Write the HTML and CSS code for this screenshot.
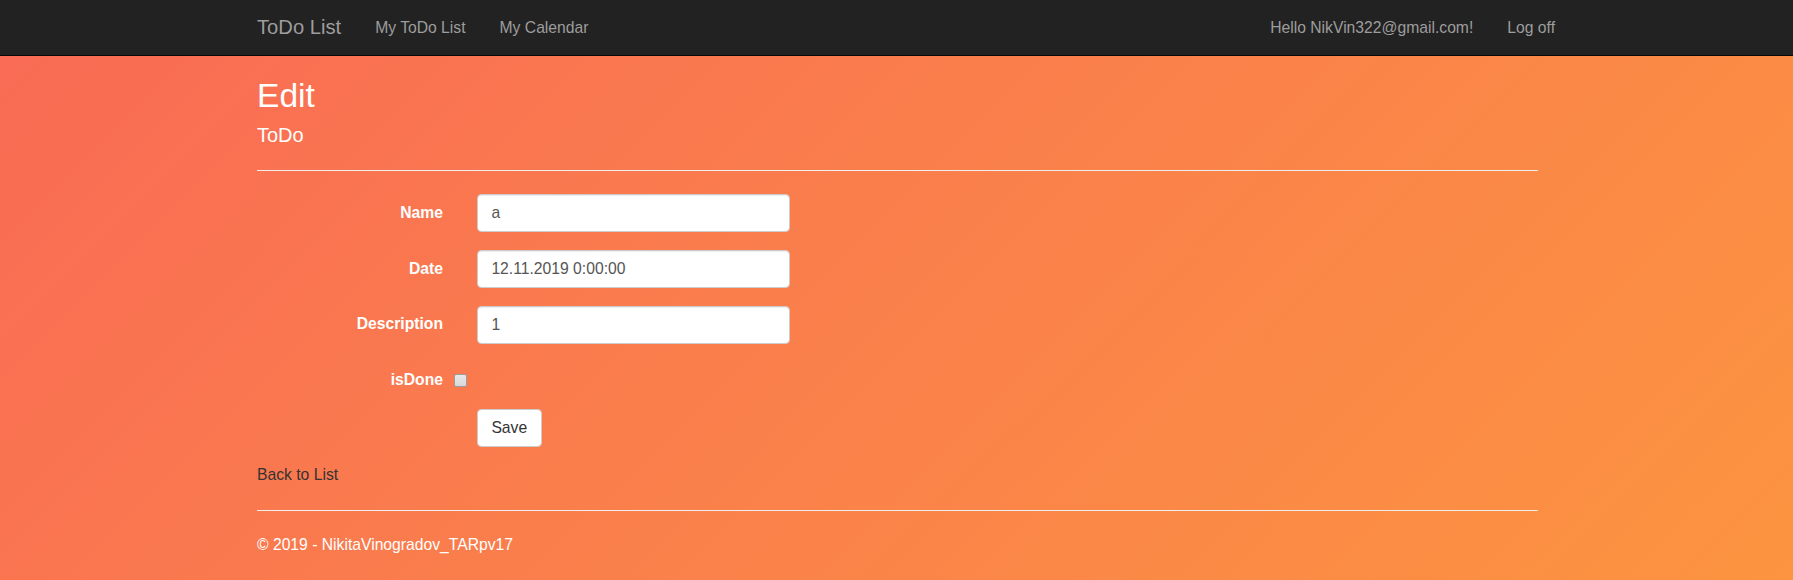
FILE: index.html
```html
<!DOCTYPE html>
<html lang="en">
<head>
<meta charset="utf-8">
<title>Edit - ToDo List</title>
<link rel="stylesheet" href="styles.css">
</head>
<body>
<header class="navbar">
  <div class="container nav-inner">
    <div class="nav-left">
      <a class="brand" href="#">ToDo List</a>
      <a class="nav-link" href="#">My ToDo List</a>
      <a class="nav-link" href="#">My Calendar</a>
    </div>
    <div class="nav-right">
      <a class="nav-link" href="#">Hello NikVin322@gmail.com!</a>
      <a class="nav-link" href="#">Log off</a>
    </div>
  </div>
</header>
<main class="container body-content">
  <h2 class="title">Edit</h2>
  <h4 class="subtitle">ToDo</h4>
  <hr class="rule rule-top">
  <form class="form">
    <div class="form-row">
      <label class="form-label" for="name">Name</label>
      <input class="form-input" id="name" type="text" value="a">
    </div>
    <div class="form-row">
      <label class="form-label" for="date">Date</label>
      <input class="form-input" id="date" type="text" value="12.11.2019 0:00:00">
    </div>
    <div class="form-row">
      <label class="form-label" for="desc">Description</label>
      <input class="form-input" id="desc" type="text" value="1">
    </div>
    <div class="form-row check-row">
      <label class="form-label" for="done">isDone</label>
      <div class="check-field"><input class="check" id="done" type="checkbox"></div>
    </div>
    <div class="form-row">
      <span></span>
      <div><button class="btn" type="button">Save</button></div>
    </div>
  </form>
  <div class="back"><a class="back-link" href="#">Back to List</a></div>
  <hr class="rule rule-bottom">
  <footer class="footer">
    <p class="footer-text">&copy; 2019 - NikitaVinogradov_TARpv17</p>
  </footer>
</main>
</body>
</html>
```
FILE: styles.css
```css
* { box-sizing: border-box; }

html, body { height: 100%; }

body {
  margin: 0;
  min-height: 100vh;
  font-family: "Liberation Sans", Arial, Helvetica, sans-serif;
  font-size: 15.7px;
  line-height: 22.4px;
  color: #333;
  background: linear-gradient(135deg, #f96a55 0%, #fa7e4c 45%, #fc9440 100%);
}

a { text-decoration: none; }

.container {
  width: 1281px;
  margin-left: calc(50% - 639.5px);
}

/* Navbar */
.navbar {
  height: 56px;
  background: #222;
  border-bottom: 1px solid #080808;
}

.nav-inner {
  display: flex;
  justify-content: space-between;
  height: 55px;
}

.nav-left, .nav-right {
  display: flex;
  align-items: flex-start;
}

.nav-left { margin-left: -17px; }
.nav-right { margin-right: -34px; }

.brand {
  font-size: 20.2px;
  line-height: 22.4px;
  padding: 16px 17px;
  color: #9d9d9d;
}

.nav-link {
  font-size: 15.7px;
  line-height: 22.4px;
  padding: 16.5px 17px;
  color: #9d9d9d;
}

/* Headings */
.title {
  margin: 21px 0 0;
  font-size: 33.6px;
  line-height: 37px;
  font-weight: 500;
  color: #fff;
}

.subtitle {
  margin: 10.3px 0 0;
  font-size: 20px;
  line-height: 22px;
  font-weight: 500;
  color: #fff;
}

.rule {
  border: 0;
  border-top: 1px solid #eee;
  margin: 0;
  height: 0;
}

.rule-top { margin-top: 23.6px; }
.rule-bottom { margin-top: 23px; }

/* Form */
.form {
  display: flex;
  flex-direction: column;
  gap: 17.7px;
  margin-top: 23.3px;
}

.form-row {
  display: grid;
  grid-template-columns: 186px 1fr;
  column-gap: 34px;
}

.form-label {
  text-align: right;
  font-weight: bold;
  color: #fff;
  padding-top: 7.8px;
}

.form-input {
  display: block;
  width: 313px;
  height: 38px;
  padding: 6.7px 13.4px;
  font-family: inherit;
  font-size: 15.7px;
  line-height: 22.4px;
  color: #555;
  background: #fff;
  border: 1px solid #ccc;
  border-radius: 4.5px;
  box-shadow: inset 0 1px 1px rgba(0,0,0,0.075);
}

.check-row { min-height: 30.2px; }

.check-field {
  margin-left: -23px;
  padding-top: 12.6px;
  line-height: 0;
}

.check {
  -webkit-appearance: none;
  appearance: none;
  display: block;
  margin: 0;
  width: 13px;
  height: 13px;
  border: 1px solid #9c9c9c;
  border-radius: 2px;
  background: linear-gradient(#e8e8e8, #d8d8d8);
}

.btn {
  display: inline-block;
  height: 37.5px;
  padding: 6.7px 13.4px;
  font-family: inherit;
  font-size: 15.7px;
  line-height: 22.4px;
  color: #333;
  background: #fff;
  border: 1px solid #ccc;
  border-radius: 4.5px;
}

.back {
  margin-top: 17.7px;
}

.back-link { color: #333; }

.footer-text {
  margin: 23.3px 0 0;
  color: #fff;
}
```
